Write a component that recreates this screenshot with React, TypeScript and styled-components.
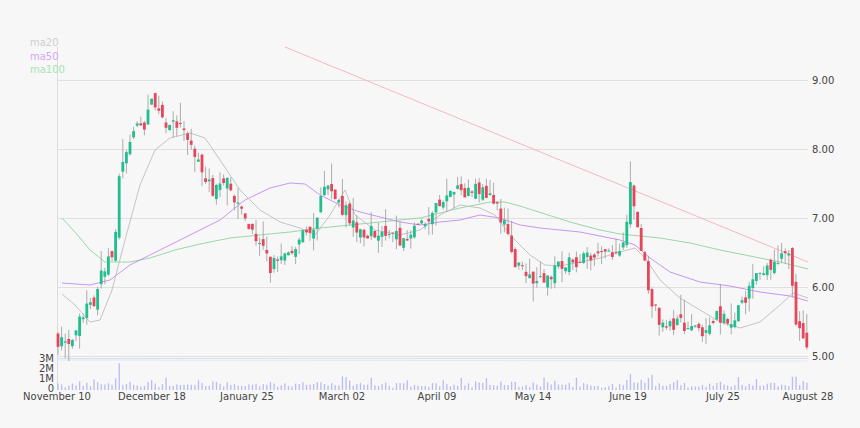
import React from "react";
import styled, { createGlobalStyle } from "styled-components";

const Global = createGlobalStyle`
  html, body { margin: 0; padding: 0; background: #f7f7f7; }
  body { font-family: "DejaVu Sans", "Noto Sans", sans-serif; }
`;

const Page = styled.div`
  width: 860px;
  height: 428px;
  background: #f7f7f7;
  position: relative;
  overflow: hidden;
`;

const Legend = styled.div`
  position: absolute;
  left: 30px;
  top: 37px;
  display: flex;
  flex-direction: column;
  gap: 1px;
  font-size: 10px;
  line-height: 12.5px;
`;

const LegendItem = styled.span<{ $c: string }>`
  color: ${(p) => p.$c};
`;

const pts: [number, number][] = [
  [57, 5.25], [64, 5.2], [70, 5.05], [80, 5.5], [88, 5.7], [95, 5.65], [103, 6.3], [112, 6.4],
  [116, 6.9], [119, 7.6], [125, 7.8], [135, 8.3], [145, 8.35], [152, 8.7], [160, 8.4],
  [175, 8.35], [185, 8.3], [195, 7.9], [205, 7.5], [215, 7.4], [230, 7.5], [240, 7.1],
  [255, 6.8], [270, 6.3], [280, 6.4], [300, 6.7], [315, 6.8], [325, 7.6], [335, 7.3],
  [350, 7.0], [360, 6.8], [380, 6.8], [400, 6.7], [420, 6.9], [440, 7.2], [460, 7.4],
  [480, 7.4], [495, 7.2], [505, 6.9], [515, 6.4], [535, 6.05], [550, 6.2], [570, 6.35],
  [590, 6.4], [610, 6.45], [625, 6.6], [631, 7.6], [636, 7.0], [642, 6.5], [650, 5.9],
  [660, 5.5], [680, 5.45], [700, 5.35], [715, 5.6], [730, 5.5], [745, 5.8], [760, 6.2],
  [775, 6.3], [785, 6.55], [790, 6.45], [794, 5.6], [800, 5.4], [805, 5.05], [809, 5.35],
];

function priceAt(x: number) {
  for (let i = 0; i < pts.length - 1; i++) {
    const [x0, p0] = pts[i];
    const [x1, p1] = pts[i + 1];
    if (x >= x0 && x <= x1) return p0 + ((p1 - p0) * (x - x0)) / (x1 - x0);
  }
  return pts[pts.length - 1][1];
}

let seed = 7;
const rnd = () => {
  seed = (seed * 16807) % 2147483647;
  return seed / 2147483647;
};

const y = (p: number) => 356 - (p - 5) * 69;

type Candle = { x: number; o: number; c: number; h: number; l: number; v: number };
const candles: Candle[] = [];
{
  const step = 3.6;
  let prev = priceAt(57);
  for (let x = 58; x <= 809; x += step) {
    const base = priceAt(x);
    const c = base + (rnd() - 0.5) * 0.22;
    const o = prev + (rnd() - 0.5) * 0.18;
    const h = Math.max(o, c) + rnd() * rnd() * 0.35;
    const l = Math.min(o, c) - rnd() * rnd() * 0.3;
    const jump = Math.abs(c - o);
    const v = 2 + rnd() * 3 + jump * 18 + (rnd() < 0.08 ? 6 : 0);
    candles.push({ x, o, c, h, l, v });
    prev = c;
  }
}

const line = (a: [number, number][]) => a.map((p) => p.join(",")).join(" ");

const ma20: [number, number][] = [[62, 294], [75, 305], [90, 322], [100, 320], [112, 290], [125, 240], [140, 185], [155, 150], [170, 138], [190, 133], [205, 138], [220, 160], [240, 190], [260, 210], [280, 222], [300, 228], [315, 235], [330, 215], [345, 190], [355, 215], [375, 230], [400, 235], [420, 230], [440, 215], [460, 205], [480, 208], [495, 215], [510, 235], [530, 255], [545, 265], [560, 266], [580, 262], [600, 258], [620, 252], [635, 248], [645, 258], [660, 280], [680, 298], [700, 310], [720, 322], [740, 328], [760, 322], [780, 305], [793, 293], [808, 298]];
const ma50: [number, number][] = [[62, 283], [90, 285], [110, 280], [130, 265], [160, 250], [190, 235], [220, 220], [245, 200], [270, 188], [290, 183], [305, 184], [320, 195], [340, 205], [360, 212], [380, 217], [400, 222], [420, 225], [440, 222], [460, 220], [480, 215], [500, 218], [520, 225], [540, 228], [560, 230], [580, 232], [600, 236], [620, 240], [635, 245], [650, 258], [670, 272], [700, 282], [730, 286], [760, 292], [790, 296], [808, 301]];
const ma100: [number, number][] = [[62, 218], [75, 232], [90, 250], [105, 262], [130, 262], [150, 258], [175, 250], [200, 244], [230, 238], [260, 235], [290, 232], [320, 228], [350, 225], [380, 222], [420, 218], [460, 208], [490, 202], [505, 202], [520, 206], [545, 214], [570, 222], [600, 230], [620, 234], [640, 236], [660, 238], [690, 243], [720, 250], [750, 256], [780, 262], [808, 269]];

const prices = [9, 8, 7, 6, 5];
const dates: [number, string][] = [[57, "November 10"], [152, "December 18"], [247, "January 25"], [342, "March 02"], [437, "April 09"], [533, "May 14"], [628, "June 19"], [723, "July 25"], [808, "August 28"]];
const vols: [number, string][] = [[389, "0"], [379, "1M"], [369, "2M"], [359, "3M"]];

const Chart = () => (
  <svg width="860" height="428" style={{ display: "block" }} fontFamily="DejaVu Sans, sans-serif" fontSize="10">
    <line x1="57.5" y1="47" x2="57.5" y2="390" stroke="#ddd" />
    {prices.map((p) => (
      <g key={p}>
        <line x1="57" x2="808" y1={y(p) + 0.5} y2={y(p) + 0.5} stroke="#e0e0e0" />
        <text x="812" y={y(p) + 4} fill="#444">{p.toFixed(2)}</text>
      </g>
    ))}
    <line x1="57" x2="808" y1="358.5" y2="358.5" stroke="#d6e0ee" />
    <line x1="57" x2="808" y1="360" y2="361" stroke="#dfe8f5" />
    <line x1="285" y1="47" x2="808" y2="262" stroke="#f6b8c0" />
    <polyline points={line(ma100)} fill="none" stroke="#8fd49e" strokeWidth="0.9" />
    <polyline points={line(ma50)} fill="none" stroke="#c38af2" strokeWidth="0.9" />
    <polyline points={line(ma20)} fill="none" stroke="#bdbdbd" strokeWidth="0.9" />
    {candles.map((c, i) => {
      const up = c.c >= c.o;
      const col = up ? "#1fbf8f" : "#e8455a";
      const top = y(Math.max(c.o, c.c));
      const h = Math.max(1, Math.abs(y(c.o) - y(c.c)));
      return (
        <g key={i}>
          <line x1={c.x} x2={c.x} y1={y(c.h)} y2={y(c.l)} stroke="#999" strokeWidth="0.8" />
          <rect x={c.x - 1.4} y={top} width="2.8" height={h} fill={col} />
          <rect x={c.x - 0.6} y={390 - c.v} width="1.3" height={c.v} fill="#b8bcf0" />
        </g>
      );
    })}
    {vols.map(([yy, t]) => (
      <text key={t} x="54" y={yy + 3} fill="#444" textAnchor="end">{t}</text>
    ))}
    {dates.map(([x, t]) => (
      <text key={t} x={x} y="400" fill="#444" textAnchor="middle">{t}</text>
    ))}
  </svg>
);

export default function App() {
  return (
    <Page>
      <Global />
      <Chart />
      <Legend>
        <LegendItem $c="#cfcfcf">ma20</LegendItem>
        <LegendItem $c="#d6a6f7">ma50</LegendItem>
        <LegendItem $c="#a8e2b6">ma100</LegendItem>
      </Legend>
    </Page>
  );
}
